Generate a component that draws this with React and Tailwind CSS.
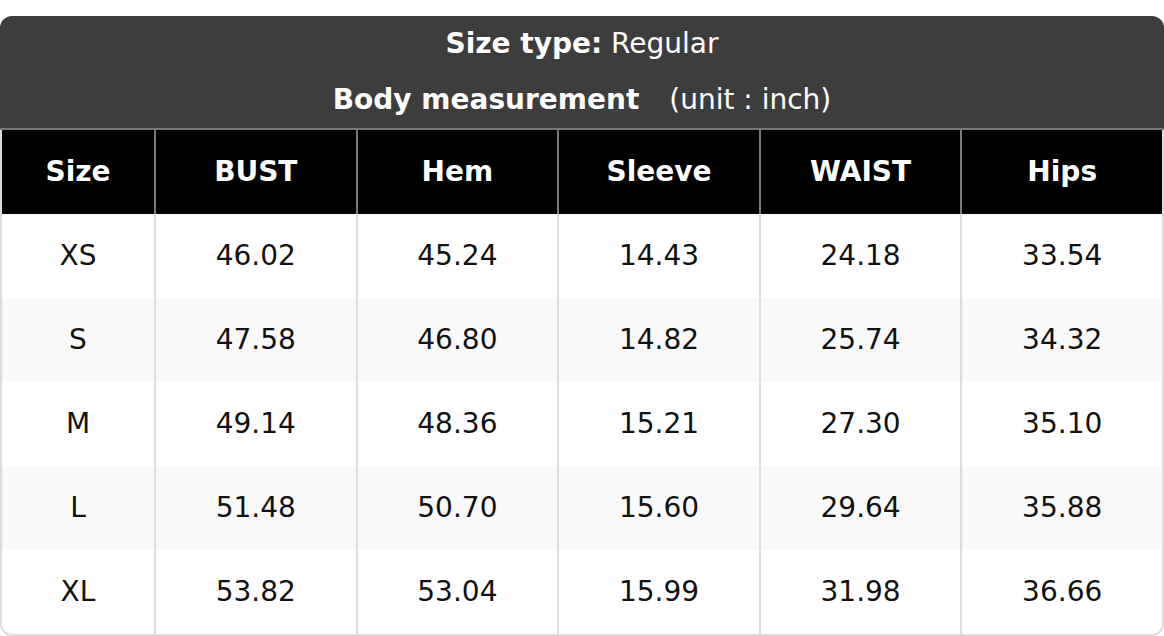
import React from "react";

const columns = ["Size", "BUST", "Hem", "Sleeve", "WAIST", "Hips"];

const rows = [
  ["XS", "46.02", "45.24", "14.43", "24.18", "33.54"],
  ["S", "47.58", "46.80", "14.82", "25.74", "34.32"],
  ["M", "49.14", "48.36", "15.21", "27.30", "35.10"],
  ["L", "51.48", "50.70", "15.60", "29.64", "35.88"],
  ["XL", "53.82", "53.04", "15.99", "31.98", "36.66"],
];

export default function App() {
  return (
    <div
      className="w-[1164px] h-[636px] bg-white pt-4 text-[28px]"
      style={{ fontFamily: '"DejaVu Sans", "Liberation Sans", sans-serif' }}
    >
      {/* 제목 */}
      <div className="bg-[#3d3d3d] text-white rounded-t-[12px] border-b-2 border-[#777]">
        <div className="h-14 flex items-center justify-center">
          <span className="font-bold">Size type:</span>
          <span>&nbsp;Regular</span>
        </div>
        <div className="h-14 flex items-center justify-center">
          <span className="font-bold">Body measurement</span>
          <span className="ml-[30px]">(unit : inch)</span>
        </div>
      </div>

      {/* 표 */}
      <div className="border-2 border-t-0 border-[#dcdcdc] rounded-b-[12px] overflow-hidden">
        <div className="grid grid-cols-[152px_repeat(5,1fr)] bg-black text-white font-bold">
          {columns.map((c, i) => (
            <div
              key={c}
              className={`h-[84px] flex items-center justify-center ${
                i > 0 ? "border-l-2 border-[#7a7a7a]" : ""
              }`}
            >
              {c}
            </div>
          ))}
        </div>
        {rows.map((r, ri) => (
          <div
            key={r[0]}
            className={`grid grid-cols-[152px_repeat(5,1fr)] text-[#111] ${
              ri % 2 === 1 ? "bg-[#f9f9f9]" : "bg-white"
            }`}
          >
            {r.map((v, i) => (
              <div
                key={i}
                className={`h-[84px] flex items-center justify-center ${
                  i > 0 ? "border-l-2 border-[#dcdcdc]" : ""
                }`}
              >
                {v}
              </div>
            ))}
          </div>
        ))}
      </div>
    </div>
  );
}
